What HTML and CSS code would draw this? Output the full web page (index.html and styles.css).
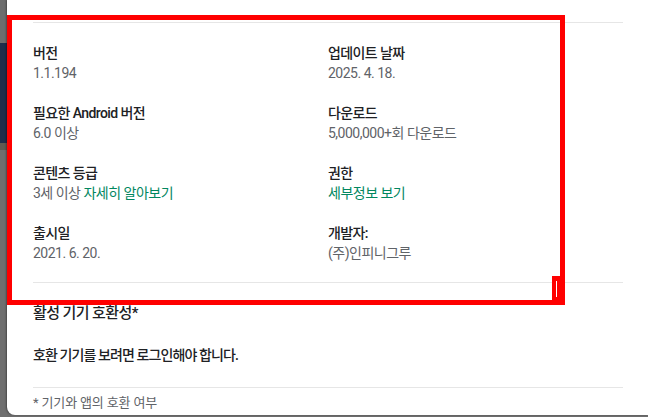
FILE: index.html
```html
<!DOCTYPE html>
<html lang="ko">
<head>
<meta charset="utf-8">
<link rel="stylesheet" href="styles.css">
</head>
<body>
<div class="page">
  <div class="backdrop">
    <div class="bd-grey"></div>
    <div class="bd-blue"></div>
    <div class="bd-band"></div>
    <div class="bd-rest"></div>
  </div>
  <div class="dialog">
    <div class="divider top"></div>
    <div class="grid">
      <div class="item"><div class="label">버전</div><div class="value">1.1.194</div></div>
      <div class="item"><div class="label">업데이트 날짜</div><div class="value">2025. 4. 18.</div></div>
      <div class="item"><div class="label">필요한 Android 버전</div><div class="value">6.0 이상</div></div>
      <div class="item"><div class="label">다운로드</div><div class="value">5,000,000+회 다운로드</div></div>
      <div class="item"><div class="label">콘텐츠 등급</div><div class="value">3세 이상 <span class="link">자세히 알아보기</span></div></div>
      <div class="item"><div class="label">권한</div><div class="value"><span class="link">세부정보 보기</span></div></div>
      <div class="item"><div class="label">출시일</div><div class="value">2021. 6. 20.</div></div>
      <div class="item"><div class="label">개발자:</div><div class="value">(주)인피니그루</div></div>
    </div>
    <div class="divider"></div>
    <h2 class="heading">활성 기기 호환성*</h2>
    <p class="login">호환 기기를 보려면 로그인해야 합니다.</p>
    <div class="divider"></div>
    <p class="note">* 기기와 앱의 호환 여부</p>
  </div>
  <div class="highlight"></div>
  <div class="notch"><span></span></div>
</div>
</body>
</html>
```
FILE: styles.css
```css
html, body {
  margin: 0;
  padding: 0;
  width: 648px;
  height: 417px;
  overflow: hidden;
  background: #6e6e6e;
  font-family: Roboto, "Noto Sans CJK KR", sans-serif;
}
.page {
  position: relative;
  width: 648px;
  height: 417px;
  display: flex;
}
.backdrop {
  width: 7px;
  flex: none;
  display: flex;
  flex-direction: column;
}
.bd-grey { height: 43px; background: #6d6d6d; }
.bd-blue { height: 100px; background: #1d2d4a; }
.bd-band { height: 7px; background: #5e5a52; }
.bd-rest { flex: 1; background: #6f6f6f; }
.dialog {
  flex: 1;
  height: 415px;
  background: #fff;
  border-bottom-left-radius: 8px;
  box-shadow: -1px 0 2px rgba(0,0,0,0.35);
  padding: 22px 25px 0 26px;
  box-sizing: border-box;
}
.divider {
  height: 1px;
  background: #e6e6e6;
  width: 590px;
}
.grid {
  display: grid;
  grid-template-columns: 295px 295px;
  row-gap: 20px;
  padding: 20px 0 19px;
}
.label {
  font-size: 14px;
  line-height: 20px;
  font-weight: 500;
  color: #202124;
  letter-spacing: -0.6px;
}
.value {
  font-size: 14px;
  line-height: 20px;
  color: #5f6368;
  letter-spacing: -0.5px;
}
.link { color: #01875f; }
.heading {
  margin: 19px 0 0;
  font-size: 15px;
  line-height: 22px;
  font-weight: 500;
  color: #202124;
  letter-spacing: -0.6px;
}
.login {
  margin: 21px 0 22px;
  font-size: 14px;
  line-height: 20px;
  font-weight: 500;
  color: #202124;
  letter-spacing: -0.9px;
}
.note {
  margin: 6px 0 0;
  font-size: 13px;
  line-height: 18px;
  color: #5f6368;
  letter-spacing: -0.15px;
}
.highlight {
  position: absolute;
  left: 7px;
  top: 15px;
  width: 558px;
  height: 290px;
  border: 5px solid #ff0000;
  box-sizing: border-box;
}
.notch {
  position: absolute;
  left: 552px;
  top: 276px;
  width: 8px;
  height: 24px;
  background: #ff0000;
}
.notch span {
  position: absolute;
  left: 4px;
  top: 5px;
  width: 1px;
  height: 16px;
  background: #fff;
}
```
